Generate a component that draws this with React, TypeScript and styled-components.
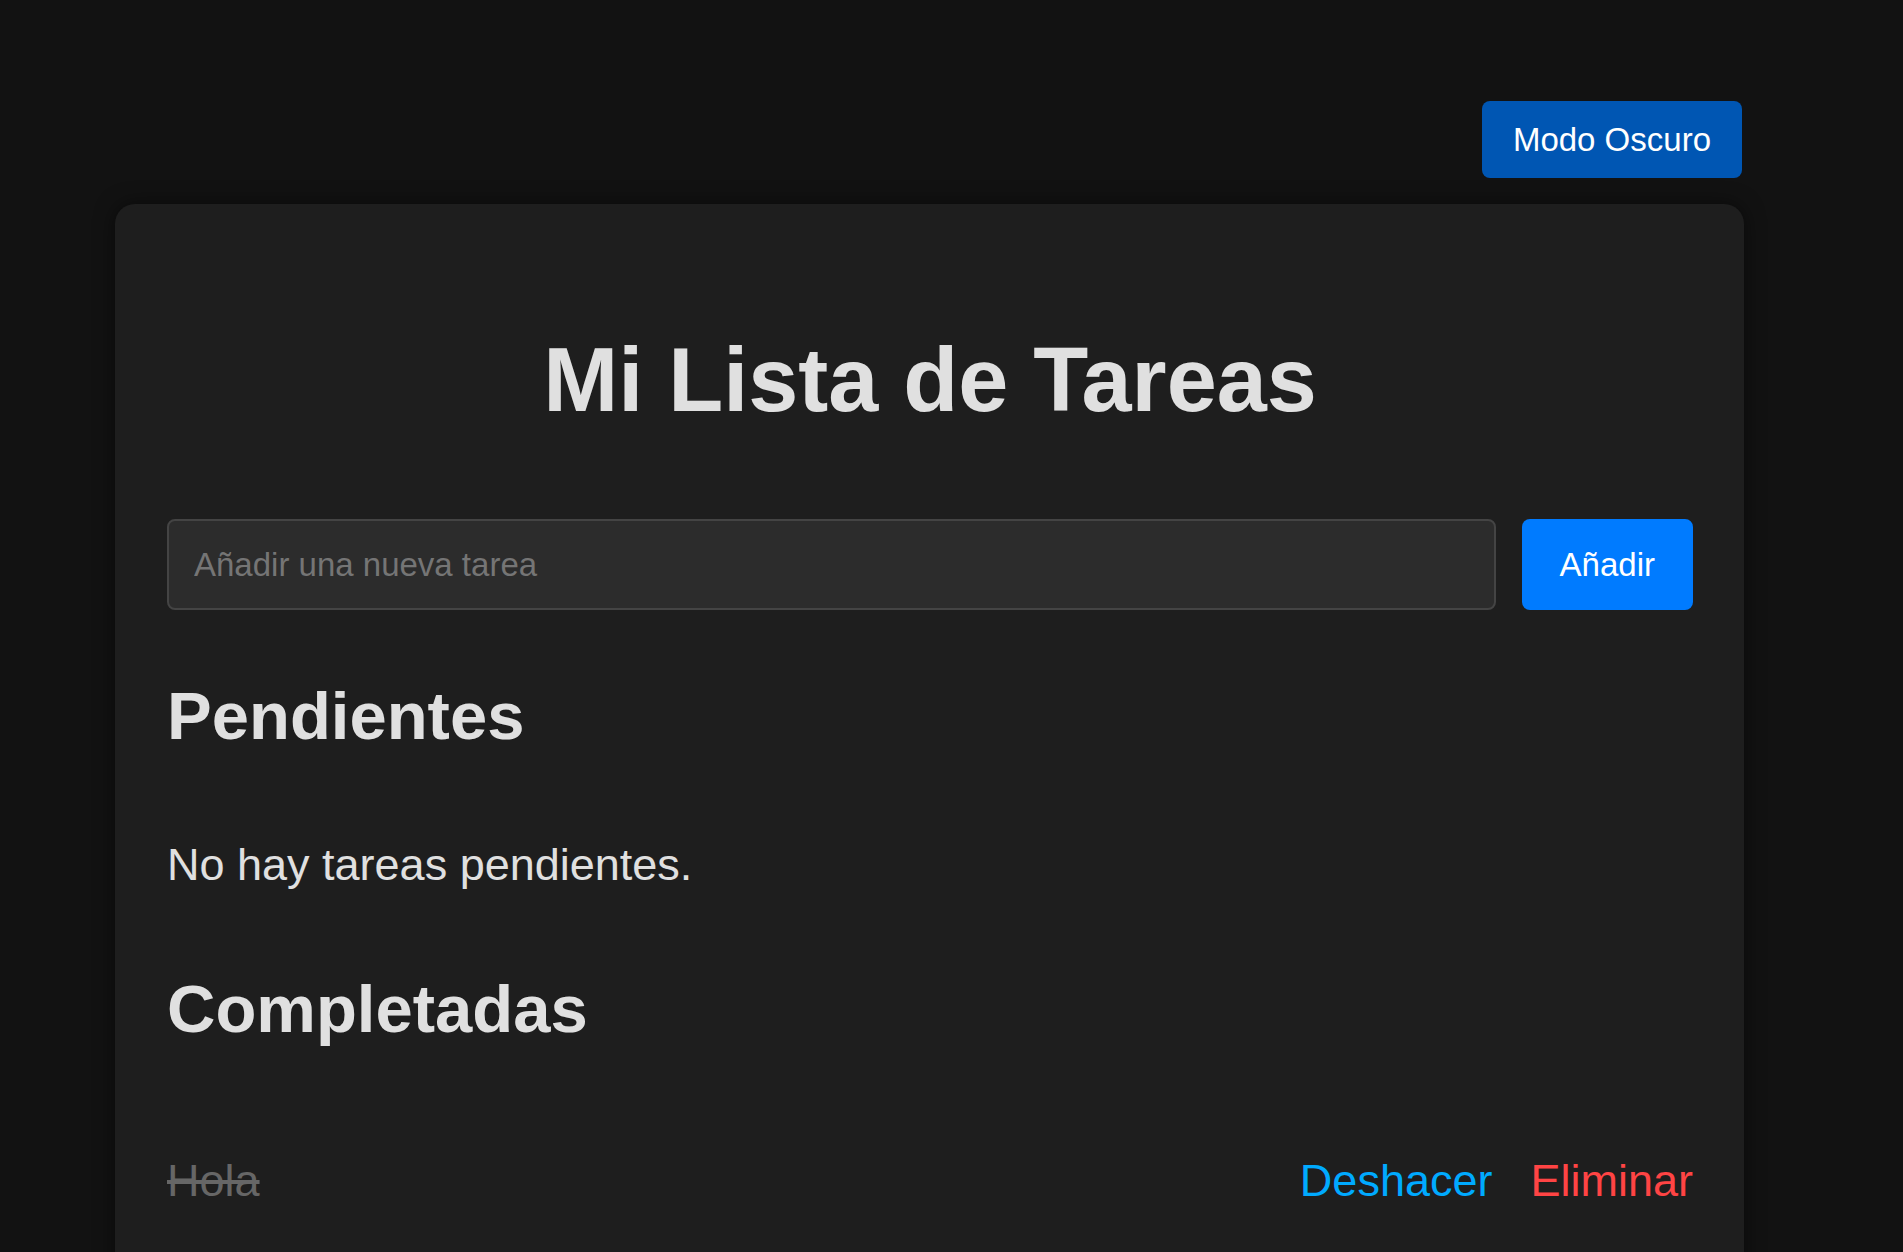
import styled, { createGlobalStyle } from 'styled-components'

const FONT = '"Liberation Sans", Arial, Helvetica, sans-serif'
const TEXT = '#e0e0e0'

const GlobalStyle = createGlobalStyle`
  * { box-sizing: border-box; }
  body {
    margin: 0;
    background: #121212;
    font-family: ${FONT};
    color: ${TEXT};
  }
`

const Page = styled.div`
  padding: 101px 159px 0 115px;
  min-height: 100vh;
`

const TopBar = styled.div`
  display: flex;
  justify-content: flex-end;
  padding-right: 2px;
`

const ThemeToggle = styled.button`
  height: 77px;
  padding: 0 31px;
  background: #0056b3;
  color: white;
  border: none;
  border-radius: 8px;
  font-family: ${FONT};
  font-size: 33px;
  cursor: pointer;
`

const Card = styled.main`
  margin-top: 26px;
  background: #1e1e1e;
  border-radius: 20px;
  padding: 50px 51px 90px 52px;
  box-shadow: 0 0 20px rgba(0, 0, 0, 0.5);
`

const Title = styled.h1`
  margin: 75px 0 0;
  font-size: 90px;
  line-height: 102px;
  font-weight: 700;
  text-align: center;
  color: ${TEXT};
`

const InputRow = styled.form`
  margin-top: 88px;
  display: flex;
  gap: 26px;
  height: 91px;
`

const TaskInput = styled.input`
  flex: 1;
  min-width: 0;
  height: 100%;
  padding: 0 25px;
  background: #2c2c2c;
  border: 2px solid #444;
  border-radius: 8px;
  color: ${TEXT};
  font-family: ${FONT};
  font-size: 33px;
  outline: none;
  &::placeholder { color: #757575; }
`

const AddButton = styled.button`
  height: 100%;
  padding: 0 38px;
  background: #007bff;
  color: white;
  border: none;
  border-radius: 8px;
  font-family: ${FONT};
  font-size: 33px;
  cursor: pointer;
`

const SectionTitle = styled.h2<{ gap: number }>`
  margin: ${p => p.gap}px 0 0;
  font-size: 67px;
  line-height: 77px;
  font-weight: 700;
  color: ${TEXT};
`

const EmptyText = styled.p`
  margin: 85px 0 0;
  font-size: 45px;
  line-height: 52px;
`

const TaskList = styled.ul`
  list-style: none;
  margin: 108px 0 0;
  padding: 0;
`

const TaskRow = styled.li`
  display: flex;
  align-items: baseline;
  justify-content: space-between;
  line-height: 52px;
`

const TaskText = styled.span<{ done?: boolean }>`
  font-size: 45px;
  color: ${p => p.done ? '#666' : TEXT};
  text-decoration: ${p => p.done ? 'line-through' : 'none'};
`

const Actions = styled.div`
  display: flex;
  align-items: baseline;
  gap: 38px;
`

const LinkButton = styled.button<{ tone: 'undo' | 'delete' }>`
  background: none;
  border: none;
  padding: 0;
  font-family: ${FONT};
  font-size: 45px;
  line-height: 52px;
  color: ${p => p.tone === 'undo' ? '#00aaff' : '#ff4444'};
  cursor: pointer;
`

const completed = [{ id: 1, text: 'Hola' }]

export default function App() {
  return (
    <>
      <GlobalStyle />
      <Page>
        <TopBar>
          <ThemeToggle>Modo Oscuro</ThemeToggle>
        </TopBar>
        <Card>
          <Title>Mi Lista de Tareas</Title>
          <InputRow onSubmit={e => e.preventDefault()}>
            <TaskInput placeholder="Añadir una nueva tarea" />
            <AddButton type="submit">Añadir</AddButton>
          </InputRow>

          <SectionTitle gap={67}>Pendientes</SectionTitle>
          <EmptyText>No hay tareas pendientes.</EmptyText>

          <SectionTitle gap={79}>Completadas</SectionTitle>
          <TaskList>
            {completed.map(t => (
              <TaskRow key={t.id}>
                <TaskText done>{t.text}</TaskText>
                <Actions>
                  <LinkButton tone="undo">Deshacer</LinkButton>
                  <LinkButton tone="delete">Eliminar</LinkButton>
                </Actions>
              </TaskRow>
            ))}
          </TaskList>
        </Card>
      </Page>
    </>
  )
}
